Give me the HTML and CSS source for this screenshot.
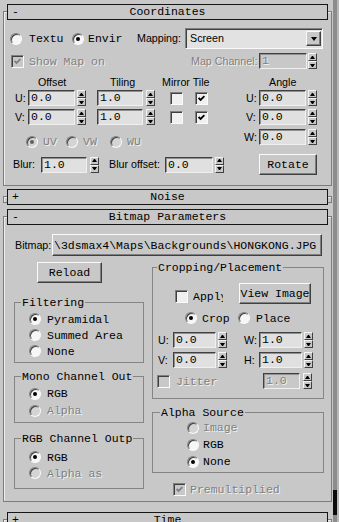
FILE: index.html
```html
<!DOCTYPE html>
<html lang="en">
<head>
  <meta charset="UTF-8" />
  <meta name="viewport" content="width=device-width, initial-scale=1" />
  <title>Bitmap Parameters</title>
  <link rel="stylesheet" href="styles.css">
</head>
<body>
<div class="screen">
  <div class="panel">

    <!-- Coordinates -->
    <div class="roll mt11">
      <div class="rhead"><span class="sign">-</span><span class="rtitle">Coordinates</span><span></span></div>
      <div class="rbody pb10">
        <div class="row h21 mt8">
          <span class="radio ml6"></span><span class="opt ml7 w36">Textu</span>
          <span class="radio on ml7"></span><span class="opt ml4 w36">Envir</span>
          <span class="lbl ml13 w46">Mapping:</span>
          <span class="select ml2 w138"><span class="sel-text">Screen</span><span class="drop"></span></span>
        </div>
        <div class="row h16 mt4">
          <span class="check dis ml7"><svg class="tick" width="7" height="7" viewBox="0 0 7 7"><path d="M0.6 3 L2.6 5 L6.4 1.2"/></svg></span>
          <span class="opt dis ml5 w78">Show Map on</span>
          <span class="lbl dis ml84 w66">Map Channel:</span>
          <span class="num dis ml2 w48">1</span><span class="spin ml1"><i></i><i></i></span>
        </div>
        <div class="row h12 mt7">
          <span class="lbl ml34 w72">Offset</span><span class="lbl w52">Tiling</span><span class="lbl w107">Mirror Tile</span><span class="lbl">Angle</span>
        </div>
        <div class="row h16 mt2">
          <span class="lbl ml11 w13">U:</span><span class="num w47">0.0</span><span class="spin ml2"><i></i><i></i></span>
          <span class="num ml11 w46">1.0</span><span class="spin ml3"><i></i><i></i></span>
          <span class="check ml15"></span>
          <span class="check ml12"><svg class="tick" width="7" height="7" viewBox="0 0 7 7"><path d="M0.6 3 L2.6 5 L6.4 1.2"/></svg></span>
          <span class="lbl ml38 w13">U:</span><span class="num w47">0.0</span><span class="spin ml2"><i></i><i></i></span>
        </div>
        <div class="row h16 mt3">
          <span class="lbl ml11 w13">V:</span><span class="num w47">0.0</span><span class="spin ml2"><i></i><i></i></span>
          <span class="num ml11 w46">1.0</span><span class="spin ml3"><i></i><i></i></span>
          <span class="check ml15"></span>
          <span class="check ml12"><svg class="tick" width="7" height="7" viewBox="0 0 7 7"><path d="M0.6 3 L2.6 5 L6.4 1.2"/></svg></span>
          <span class="lbl ml38 w13">V:</span><span class="num w47">0.0</span><span class="spin ml2"><i></i><i></i></span>
        </div>
        <div class="row h19 mt4 bottom">
          <span class="radio dis on ml22"></span><span class="opt dis ml5 w16">UV</span>
          <span class="radio dis ml7"></span><span class="opt dis ml5 w16">VW</span>
          <span class="radio dis ml11"></span><span class="opt dis ml5 w16">WU</span>
          <span class="row h16 top ml101"><span class="lbl w15">W:</span><span class="num w47">0.0</span><span class="spin ml2"><i></i><i></i></span></span>
        </div>
        <div class="row h21 mt6">
          <span class="lbl ml9 w28">Blur:</span><span class="num w46">1.0</span><span class="spin ml3"><i></i><i></i></span>
          <span class="lbl ml10 w56">Blur offset:</span><span class="num w48">0.0</span><span class="spin ml2"><i></i><i></i></span>
          <span class="btn ml35 w58 h21">Rotate</span>
        </div>
      </div>
    </div>

    <!-- Noise -->
    <div class="roll closed mt10">
      <div class="rhead"><span class="sign">+</span><span class="rtitle">Noise</span><span></span></div>
    </div>

    <!-- Bitmap Parameters -->
    <div class="roll mt13">
      <div class="rhead"><span class="sign">-</span><span class="rtitle">Bitmap Parameters</span><span></span></div>
      <div class="rbody pb5">
        <div class="row h22 mt9">
          <span class="lbl ml11 w37">Bitmap:</span><span class="btn path w270 h22">\3dsmax4\Maps\Backgrounds\HONGKONG.JPG</span>
        </div>
        <div class="cols">
          <div class="col-left">
            <span class="btn w65 h21 ml23 mt6">Reload</span>
            <fieldset class="grp mt13 pt2 pb3">
              <legend>Filtering</legend>
              <div class="row h16"><span class="radio on ml8"></span><span class="opt ml6">Pyramidal</span></div>
              <div class="row h16"><span class="radio ml8"></span><span class="opt ml6">Summed Area</span></div>
              <div class="row h16"><span class="radio ml8"></span><span class="opt ml6">None</span></div>
            </fieldset>
            <fieldset class="grp mt7 pt2 pb3">
              <legend>Mono Channel Out</legend>
              <div class="row h17"><span class="radio on ml8"></span><span class="opt ml6">RGB</span></div>
              <div class="row h17"><span class="radio dis ml8"></span><span class="opt dis ml6">Alpha</span></div>
            </fieldset>
            <fieldset class="grp mt9 pt4 pb7">
              <legend>RGB Channel Outp</legend>
              <div class="row h16"><span class="radio on ml8"></span><span class="opt ml6">RGB</span></div>
              <div class="row h16"><span class="radio dis ml8"></span><span class="opt dis ml6">Alpha as</span></div>
            </fieldset>
          </div>
          <div class="col-right">
            <fieldset class="grp pl4 mt5 pb9">
              <legend>Cropping/Placement</legend>
              <div class="row h21 mt9">
                <span class="row h13 low ml18"><span class="check"></span><span class="opt clip ml5 w30">Apply</span></span>
                <span class="btn ml16 w72 h21">View Image</span>
              </div>
              <div class="row h14 mt7">
                <span class="radio on ml28"></span><span class="opt ml5 w28">Crop</span>
                <span class="radio ml8"></span><span class="opt ml6">Place</span>
              </div>
              <div class="row h16 mt7">
                <span class="lbl ml1 w15">U:</span><span class="num w43">0.0</span><span class="spin ml2"><i></i><i></i></span>
                <span class="lbl ml17 w15">W:</span><span class="num w43">1.0</span><span class="spin ml2"><i></i><i></i></span>
              </div>
              <div class="row h16 mt4">
                <span class="lbl ml1 w15">V:</span><span class="num w43">0.0</span><span class="spin ml2"><i></i><i></i></span>
                <span class="lbl ml17 w15">H:</span><span class="num w43">1.0</span><span class="spin ml2"><i></i><i></i></span>
              </div>
              <div class="row h16 mt5">
                <span class="check dis"></span><span class="opt dis ml6 w42">Jitter</span>
                <span class="num dis ml45 w37">1.0</span><span class="spin ml3"><i></i><i></i></span>
              </div>
            </fieldset>
            <fieldset class="grp pl7 mt7 pb2">
              <legend>Alpha Source</legend>
              <div class="row h17"><span class="radio dis ml27"></span><span class="opt dis ml4">Image</span></div>
              <div class="row h17"><span class="radio ml27"></span><span class="opt ml4">RGB</span></div>
              <div class="row h17"><span class="radio on ml27"></span><span class="opt ml4">None</span></div>
            </fieldset>
            <div class="row h13 mt10">
              <span class="check dis ml21"><svg class="tick" width="7" height="7" viewBox="0 0 7 7"><path d="M0.6 3 L2.6 5 L6.4 1.2"/></svg></span>
              <span class="opt dis ml4">Premultiplied</span>
            </div>
          </div>
        </div>
      </div>
    </div>

    <!-- Time -->
    <div class="roll mt17">
      <div class="rhead"><span class="sign">+</span><span class="rtitle">Time</span><span></span></div>
    </div>

  </div>
  <div class="scroll"><div class="thumb"></div></div>
</div>
</body>
</html>
```

FILE: styles.css
```css
* { box-sizing: border-box; }
body { margin: 0; background: #c8c8c8; color: #000; font-family: "Liberation Mono", monospace; font-size: 11.5px; line-height: 13px; }
.screen { display: flex; width: 339px; height: 522px; overflow: hidden; }
.panel { width: 333px; flex: none; }
.scroll { width: 6px; flex: none; background: #8c8c8c; border-right: 2px solid #b8b8b8; padding-top: 490px; }
.thumb { height: 25px; background: #0c0c0c; }

/* rollouts */
.roll { margin-left: 3px; width: 329px; border: 1px solid #7c7c7c; box-shadow: inset 1px 1px 0 #ececec; }
.rhead { display: grid; grid-template-columns: 24px 1fr 24px; height: 16px; margin: -8px 3px 0; background: #c8c8c8; border: 1px solid #161616; line-height: 14px; }
.roll.closed .rhead { margin-bottom: -3px; }
.sign { padding-left: 4px; }
.rtitle { text-align: center; white-space: nowrap; }

.row { display: flex; align-items: center; }
.row.bottom { align-items: flex-end; }
.row .top { align-self: flex-start; }
.row .low { align-self: flex-end; margin-bottom: 1px; }
.cols { display: flex; align-items: flex-start; }
.col-left { width: 130px; margin-left: 10px; flex: none; }
.col-right { width: 172px; margin-left: 8px; flex: none; }

/* text */
.lbl { font-family: "Liberation Sans", Arial, sans-serif; font-size: 10.7px; white-space: nowrap; flex: none; }
.opt { white-space: nowrap; flex: none; }
.clip { overflow: hidden; }
.dis { color: #808080; text-shadow: 1px 1px 0 #f2f2f2; }

/* controls */
.num { display: block; flex: none; height: 16px; padding-left: 2px; background: #e0e0e0; border: 1px solid; border-color: #404040 #f0f0f0 #f0f0f0 #404040; box-shadow: inset 1px 1px 0 #909090; line-height: 14px; white-space: nowrap; overflow: hidden; }
.num.dis { background: #c8c8c8; }

.spin { display: flex; flex-direction: column; flex: none; width: 9px; height: 16px; }
.spin i { flex: 1; display: flex; align-items: center; justify-content: center; background: #c8c8c8; border: 1px solid; border-color: #f4f4f4 #404040 #404040 #f4f4f4; }
.spin i::after { content: ""; width: 1px; border-left: 2px solid transparent; border-right: 2px solid transparent; }
.spin i:first-child::after { border-bottom: 3px solid #000; }
.spin i:last-child::after { border-top: 3px solid #000; }

.radio { display: flex; align-items: center; justify-content: center; flex: none; width: 12px; height: 12px; border-radius: 50%; background: #f6f6f6; border: 1px solid; border-color: #808080 #fafafa #fafafa #808080; box-shadow: inset 1px 1px 0 #404040; }
.radio.on::after { content: ""; width: 4px; height: 4px; border-radius: 50%; background: #000; }
.radio.dis { background: #d4d4d4; }
.radio.dis.on::after { background: #606060; }

.check { display: flex; align-items: center; justify-content: center; flex: none; width: 13px; height: 13px; background: #f0f0f0; border: 1px solid; border-color: #808080 #fafafa #fafafa #808080; box-shadow: inset 1px 1px 0 #404040; }
.check.dis { background: #c8c8c8; }
.tick path { fill: none; stroke: #000; stroke-width: 1.8; }
.check.dis .tick path { stroke: #808080; }

.btn { display: flex; align-items: center; justify-content: center; flex: none; background: #c8c8c8; border: 1px solid; border-color: #fafafa #404040 #404040 #fafafa; box-shadow: inset -1px -1px 0 #808080; white-space: nowrap; overflow: hidden; }
.btn.path { justify-content: flex-start; padding-left: 1px; }

.select { display: flex; align-items: center; flex: none; height: 21px; padding: 0 1px 0 4px; background: #e2e2e2; border: 1px solid; border-color: #808080 #fafafa #fafafa #808080; box-shadow: inset 1px 1px 0 #404040; }
.sel-text { flex: 1; font-family: "Liberation Sans", Arial, sans-serif; font-size: 10.7px; }
.drop { display: flex; align-items: center; justify-content: center; width: 15px; height: 15px; background: #c8c8c8; border: 1px solid; border-color: #fafafa #404040 #404040 #fafafa; box-shadow: inset -1px -1px 0 #808080; }
.drop::after { content: ""; border-left: 3.5px solid transparent; border-right: 3.5px solid transparent; border-top: 4px solid #000; }

/* group boxes */
.grp { margin: 0; padding: 0 0 0 6px; min-width: 0; border: 1px solid #858585; }
.grp legend { padding: 0 1px; line-height: 13px; white-space: nowrap; }

/* spacing */
.pl4 { padding-left: 4px; } .pl7 { padding-left: 7px; }
.pt2 { padding-top: 2px; } .pt4 { padding-top: 4px; }
.pb2 { padding-bottom: 2px; } .pb3 { padding-bottom: 3px; } .pb5 { padding-bottom: 5px; } .pb7 { padding-bottom: 7px; } .pb9 { padding-bottom: 9px; } .pb10 { padding-bottom: 10px; }
.mt2 { margin-top: 2px; } .mt3 { margin-top: 3px; } .mt4 { margin-top: 4px; } .mt5 { margin-top: 5px; } .mt6 { margin-top: 6px; } .mt7 { margin-top: 7px; } .mt8 { margin-top: 8px; } .mt9 { margin-top: 9px; } .mt10 { margin-top: 10px; } .mt11 { margin-top: 11px; } .mt13 { margin-top: 13px; } .mt17 { margin-top: 17px; }
.ml1 { margin-left: 1px; } .ml2 { margin-left: 2px; } .ml3 { margin-left: 3px; } .ml4 { margin-left: 4px; } .ml5 { margin-left: 5px; } .ml6 { margin-left: 6px; } .ml7 { margin-left: 7px; } .ml8 { margin-left: 8px; } .ml9 { margin-left: 9px; } .ml10 { margin-left: 10px; } .ml11 { margin-left: 11px; } .ml12 { margin-left: 12px; } .ml13 { margin-left: 13px; } .ml15 { margin-left: 15px; } .ml16 { margin-left: 16px; } .ml17 { margin-left: 17px; } .ml18 { margin-left: 18px; } .ml21 { margin-left: 21px; } .ml22 { margin-left: 22px; } .ml23 { margin-left: 23px; } .ml27 { margin-left: 27px; } .ml28 { margin-left: 28px; } .ml34 { margin-left: 34px; } .ml35 { margin-left: 35px; } .ml38 { margin-left: 38px; } .ml45 { margin-left: 45px; } .ml84 { margin-left: 84px; } .ml101 { margin-left: 101px; }
.h12 { height: 12px; } .h13 { height: 13px; } .h14 { height: 14px; } .h16 { height: 16px; } .h17 { height: 17px; } .h19 { height: 19px; } .h21 { height: 21px; } .h22 { height: 22px; }
.w13 { width: 13px; } .w15 { width: 15px; } .w16 { width: 16px; } .w28 { width: 28px; } .w30 { width: 30px; } .w36 { width: 36px; } .w37 { width: 37px; } .w42 { width: 42px; } .w43 { width: 43px; } .w46 { width: 46px; } .w47 { width: 47px; } .w48 { width: 48px; } .w52 { width: 52px; } .w56 { width: 56px; } .w58 { width: 58px; } .w65 { width: 65px; } .w66 { width: 66px; } .w72 { width: 72px; } .w78 { width: 78px; } .w107 { width: 107px; } .w138 { width: 138px; } .w270 { width: 270px; }
```
